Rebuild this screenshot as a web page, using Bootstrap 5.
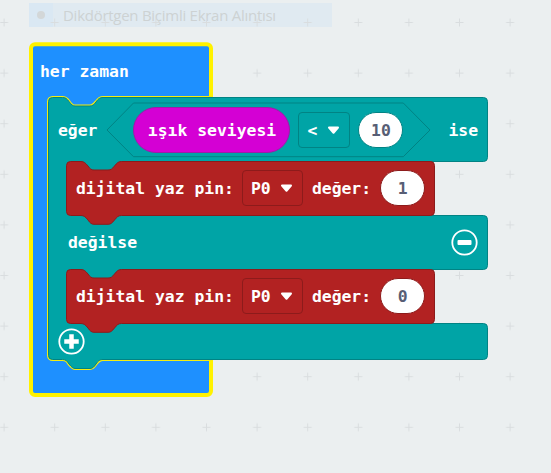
<!DOCTYPE html>
<html lang="tr">
<head>
<meta charset="utf-8">
<meta name="viewport" content="width=device-width, initial-scale=1">
<title>her zaman</title>
<link href="https://cdn.jsdelivr.net/npm/bootstrap@5.3.0/dist/css/bootstrap.min.css" rel="stylesheet">
<style>
body{background:#ebeff0;font-family:"DejaVu Sans Mono","Liberation Mono",monospace}
.workspace{width:551px;height:473px}
.shapes{left:0;top:0}
.snip{width:303px;height:24px;margin:0 0 0 29px;background:#e0eaf1;color:#cdd2d3;font:15px/25px "Open Sans","Noto Sans",sans-serif}
.snip-mark{width:24px;height:24px;background:#dae8f3}
.snip-mark span{width:8px;height:8px;background:#d3d7d8}
.snip-text{margin-left:10px;letter-spacing:-.27px}
.workspace{padding-top:3px}
.program{margin-top:16px;color:#fff;font-size:16.4px;font-weight:700;line-height:20px;white-space:nowrap}
.hat{height:54px;padding:3px 0 0 40px}
.label{padding-top:2px}
.cond{height:64px;padding:2px 0 0 58px}
.cond .hex{margin-left:36px}
.stmt{height:54px;padding-left:76px}
.alt{height:54px;padding:0 73px 0 68px}
.foot-row{height:37px;padding:0 0 1px 58px}
.pill{width:157px;height:46px;padding-top:1px;background:#d400d4;border:1px solid #9d1ba8}
.drop{height:36px;border:1px solid #018384;border-radius:4px;padding:1px 9px 0}
.stmt .drop{border-color:#8d1b1b;margin:0 9px 0 8px;width:61px;padding:1px 9px 0 8px}
.cond .drop{width:52px;margin:0 8px;padding-left:8px}
.num{width:45px;height:36px;padding-top:1px;border:1px solid #018384;background:#fff;color:#575e75}
.stmt .num{border-color:#8d1b1b;margin-left:9px}
.ise{margin-left:45px}
svg{display:block;flex:none}
</style>
<script src="https://cdn.jsdelivr.net/npm/bootstrap@5.3.0/dist/js/bootstrap.bundle.min.js"></script>
</head>
<body>
<main class="workspace position-relative overflow-hidden">
  <div class="d-flex snip">
    <div class="snip-mark d-flex align-items-center justify-content-center"><span class="rounded-circle"></span></div>
    <div class="snip-text text-nowrap">Dikdörtgen Biçimli Ekran Alıntısı</div>
  </div>

  <svg class="shapes position-absolute" width="551" height="473" viewBox="0 0 551 473" aria-hidden="true">
    <defs>
      <pattern id="grid" x="-21.2" y="-2.8" width="50.6" height="50.6" patternUnits="userSpaceOnUse">
        <path d="M21.3 25.3h8M25.3 21.3v8" stroke="#d9dddf" stroke-width="1"/>
      </pattern>
      <clipPath id="mouth"><rect x="40" y="90" width="172" height="290"/></clipPath>
      <path id="if" d="M52.5 97.5H62.5C66 97.5 67 99 69 101.5C71.5 105 73 106 75 106H90C92.500 106 94 104.500 96 102C98.500 98.500 100 97.500 103 97.500H483.500a4 4 0 0 1 4 4V157.500a4 4 0 0 1-4 4H67V215.500H483.500a4 4 0 0 1 4 4V265.500a4 4 0 0 1-4 4H67V323.500H483.500a4 4 0 0 1 4 4V355.500a4 4 0 0 1-4 4H103C100 359.500 98.500 360.500 96 364C94 367 92.500 368.500 90 368.500H75C73 368.500 71.500 367 69 364C67 361 66 359.500 62.500 359.500H52.500a4 4 0 0 1-4-4V101.500a4 4 0 0 1 4-4z"/>
      <path id="write" d="M70.500 .5H81C84 .5 85.500 2 88 5C90 8 91.500 9 94 9H108C111 9 112 8 114.500 5C117 2 118 .5 121.500 .5H430.500a4 4 0 0 1 4 4V50.500a4 4 0 0 1-4 4H121.500C118 54.500 117 56 114.500 59C112 62 111 63.300 108 63.300H94C91.500 63.300 90 62 88 59C85.500 56 84 54.500 81 54.500H70.500a4 4 0 0 1-4-4V4.500a4 4 0 0 1 4-4z"/>
    </defs>
    <rect width="551" height="473" fill="url(#grid)"/>
    <rect x="31" y="44.300" width="180" height="350.700" rx="4" fill="#1e90ff" stroke="#fff200" stroke-width="4"/>
    <use href="#if" fill="none" stroke="#f4ed12" stroke-width="3" clip-path="url(#mouth)"/>
    <use href="#if" fill="#00a4a6" stroke="#018384"/>
    <path d="M66 160H240V217H66zM66 268H240V325H66z" fill="#00a4a6"/>
    <path d="M107 130L133.500 103H403.300L430 130L403.300 156.700H133.500z" fill="none" stroke="#018384"/>
    <use href="#write" y="161" fill="#b22222" stroke="#8d1b1b"/>
    <use href="#write" y="269" fill="#b22222" stroke="#8d1b1b"/>
  </svg>

  <section class="program position-relative">
    <div class="hat d-flex align-items-center">her zaman</div>
    <div class="cond d-flex align-items-center">
      <span class="label">eğer</span>
      <div class="hex d-flex align-items-center">
        <span class="pill rounded-pill d-flex align-items-center justify-content-center">ışık seviyesi</span>
        <span class="drop d-flex align-items-center justify-content-between">&lt;<svg width="13" height="9" viewBox="0 0 13 9"><path d="M2 1.500H11L6.500 6.800z" fill="#fff" stroke="#fff" stroke-width="2" stroke-linejoin="round"/></svg></span>
        <span class="num rounded-pill d-flex align-items-center justify-content-center">10</span>
      </div>
      <span class="ise label">ise</span>
    </div>
    <div class="stmt d-flex align-items-center">
      <span class="label">dijital yaz pin:</span>
      <span class="drop d-flex align-items-center justify-content-between">P0<svg width="13" height="9" viewBox="0 0 13 9"><path d="M2 1.500H11L6.500 6.800z" fill="#fff" stroke="#fff" stroke-width="2" stroke-linejoin="round"/></svg></span>
      <span class="label">değer:</span>
      <span class="num rounded-pill d-flex align-items-center justify-content-center">1</span>
    </div>
    <div class="alt d-flex align-items-center justify-content-between">
      <span class="label">değilse</span>
      <svg width="27" height="27" viewBox="0 0 27 27"><circle cx="13.500" cy="13.500" r="12.200" fill="none" stroke="#fff" stroke-width="1.800"/><rect x="6.500" y="11" width="14" height="5" rx="1" fill="#fff"/></svg>
    </div>
    <div class="stmt d-flex align-items-center">
      <span class="label">dijital yaz pin:</span>
      <span class="drop d-flex align-items-center justify-content-between">P0<svg width="13" height="9" viewBox="0 0 13 9"><path d="M2 1.500H11L6.500 6.800z" fill="#fff" stroke="#fff" stroke-width="2" stroke-linejoin="round"/></svg></span>
      <span class="label">değer:</span>
      <span class="num rounded-pill d-flex align-items-center justify-content-center">0</span>
    </div>
    <div class="foot-row d-flex align-items-center">
      <svg width="27" height="27" viewBox="0 0 27 27"><circle cx="13.500" cy="13.500" r="12.200" fill="none" stroke="#fff" stroke-width="1.800"/><path d="M8.500 13.500H18.500M13.500 8.500V18.500" stroke="#fff" stroke-width="4.500" stroke-linecap="square"/></svg>
    </div>
  </section>
</main>
</body>
</html>
